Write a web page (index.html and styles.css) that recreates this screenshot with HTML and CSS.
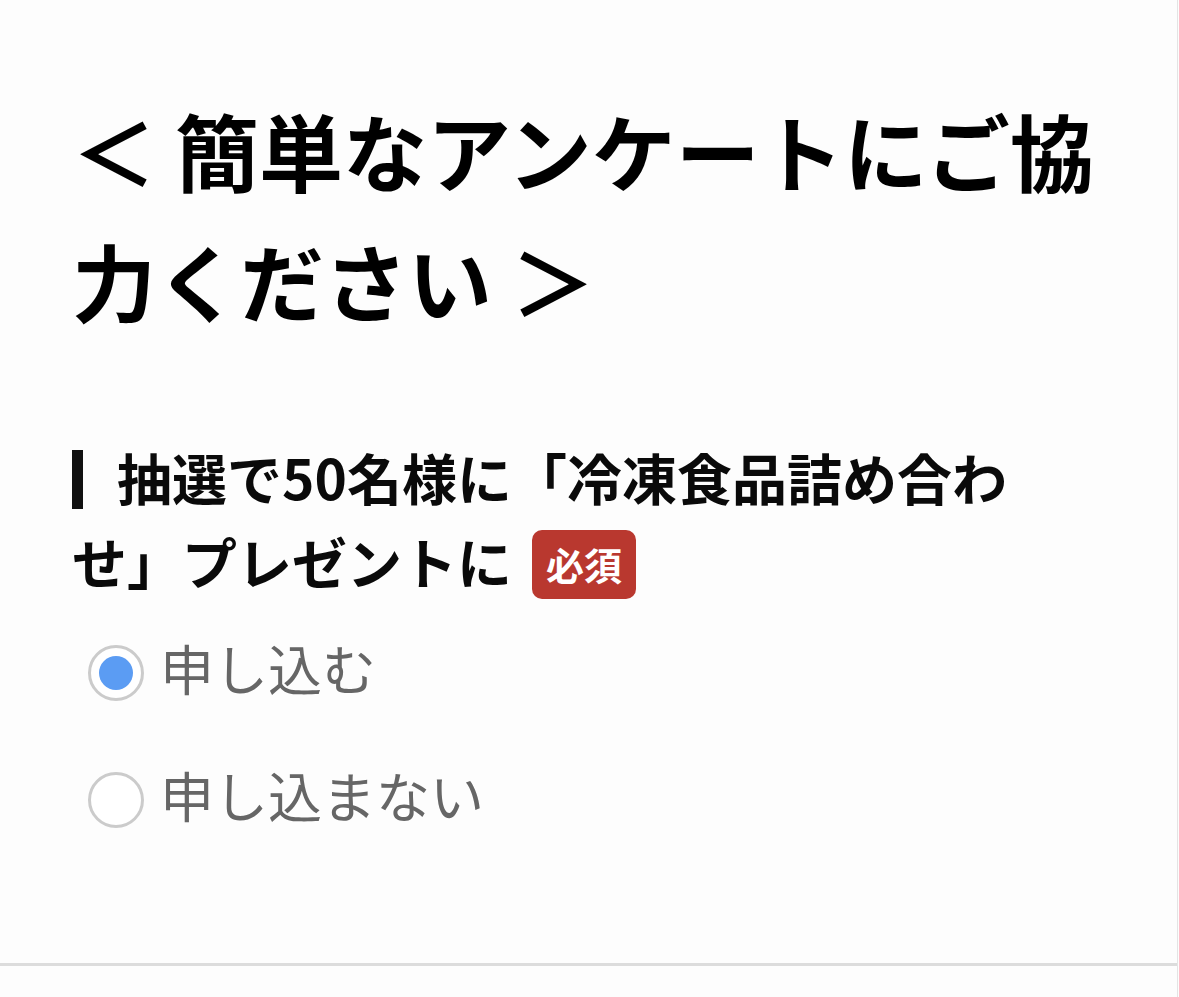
FILE: index.html
```html
<!DOCTYPE html>
<html lang="ja">
<head>
  <meta charset="UTF-8" />
  <meta name="viewport" content="width=device-width, initial-scale=1.0" />
  <title>アンケート</title>
  <link rel="stylesheet" href="styles.css">
</head>
<body>
  <div class="page">
    <section class="survey">
      <h1 class="survey-title">＜ 簡単なアンケートにご協力ください ＞</h1>

      <div class="question">
        <h2 class="question-title">
          <span class="bar"></span>抽選で50名様に「冷凍食品詰め合わせ」プレゼントに<span class="required">必須</span>
        </h2>

        <label class="choice">
          <input type="radio" name="apply" value="yes" checked />
          <span class="mark"></span>
          <span class="choice-text">申し込む</span>
        </label>
        <label class="choice">
          <input type="radio" name="apply" value="no" />
          <span class="mark"></span>
          <span class="choice-text">申し込まない</span>
        </label>
      </div>
    </section>
  </div>
</body>
</html>
```

FILE: styles.css
```css
body {
  margin: 0;
  background: #fdfdfd;
  font-family: "Noto Sans CJK JP", "Noto Sans", sans-serif;
}
.page {
  width: 1177px;
  height: 997px;
  border-right: 1px solid #e4e4e4;
}
.survey {
  padding: 85px 72px 99px;
  border-bottom: 3px solid #dcdcdc;
  height: 779px;
}
.survey-title {
  margin: 0;
  font-size: 84px;
  line-height: 130px;
  font-weight: bold;
  color: #000;
}
.question {
  margin-top: 89px;
}
.question-title {
  margin: 0;
  padding-right: 40px;
  font-size: 55px;
  line-height: 84px;
  font-weight: bold;
  color: #0a0a0a;
}
.bar {
  display: inline-block;
  width: 11px;
  height: 59px;
  background: #111;
  margin-right: 34px;
  vertical-align: -9px;
}
.required {
  display: inline-block;
  margin-left: 20px;
  padding: 0 14px;
  height: 69px;
  line-height: 67px;
  border-radius: 10px;
  background: #b9382f;
  color: #fff;
  font-size: 38px;
  vertical-align: 4px;
}
.choice {
  display: flex;
  align-items: center;
  height: 127px;
  padding-left: 16px;
}
.question-title + .choice {
  margin-top: 7px;
}
.choice input {
  display: none;
}
.mark {
  width: 50px;
  height: 50px;
  border: 3px solid #cbcbcb;
  border-radius: 50%;
  background: #fff;
  display: flex;
  align-items: center;
  justify-content: center;
  margin-right: 16px;
}
.choice input:checked + .mark::after {
  content: "";
  width: 34px;
  height: 34px;
  border-radius: 50%;
  background: #5b9cf3;
}
.choice-text {
  font-size: 54px;
  color: #666;
  padding-bottom: 10px;
}
```
